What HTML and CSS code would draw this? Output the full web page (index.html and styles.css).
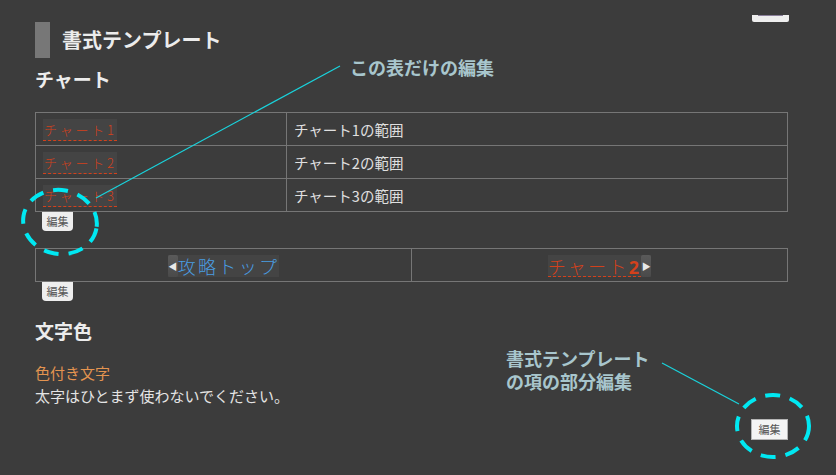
FILE: index.html
```html
<!DOCTYPE html>
<html lang="ja">
<head>
<meta charset="utf-8">
<link rel="stylesheet" href="styles.css">
</head>
<body>
<div class="page">
  <div class="top-btn"><span></span></div>
  <h2 class="sec-title"><span class="sec-bar"></span><span>書式テンプレート</span></h2>
  <h3 class="sub-title">チャート</h3>
  <table class="chart">
    <tr><td class="c1"><a class="tlink">チャート1</a></td><td>チャート1の範囲</td></tr>
    <tr><td class="c1"><a class="tlink">チャート2</a></td><td>チャート2の範囲</td></tr>
    <tr><td class="c1"><a class="tlink">チャート3</a></td><td>チャート3の範囲</td></tr>
  </table>
  <div class="edit">編集</div>
  <table class="nav">
    <tr>
      <td><span class="navbox"><span class="arr">&#9664;</span><span class="nav-blue">攻略トップ</span></span></td>
      <td><span class="navbox"><span class="nav-red">チャート<b>2</b></span><span class="arr">&#9654;</span></span></td>
    </tr>
  </table>
  <div class="edit">編集</div>
  <h3 class="sub-title color-title">文字色</h3>
  <p class="orange">色付き文字</p>
  <p class="plain">太字はひとまず使わないでください。</p>
  <div class="edit-row"><div class="edit2">編集</div></div>
</div>

<svg class="overlay" width="836" height="475" viewBox="0 0 836 475">
  <line x1="340" y1="66" x2="96" y2="198" stroke="#19d3dc" stroke-width="1.2"/>
  <line x1="662" y1="363" x2="739" y2="404" stroke="#19d3dc" stroke-width="1.2"/>
  <ellipse cx="60" cy="222" rx="37" ry="32" fill="none" stroke="#00e8f2" stroke-width="4" stroke-dasharray="15 10" transform="rotate(10 60 222)"/>
  <ellipse cx="773" cy="426" rx="36" ry="31" fill="none" stroke="#00e8f2" stroke-width="4" stroke-dasharray="15 10"/>
</svg>
<div class="note note1">この表だけの編集</div>
<div class="note note2"><div>書式テンプレート</div><div>の項の部分編集</div></div>
</body>
</html>
```
FILE: styles.css
```css
html, body {
  margin: 0;
  padding: 0;
  background: #3c3c3c;
}
body {
  width: 836px;
  height: 475px;
  overflow: hidden;
  position: relative;
  font-family: "Noto Sans CJK JP", "Noto Sans", sans-serif;
  color: #e2e2e2;
}
.page {
  padding: 22px 48px 0 35px;
}
.top-btn {
  position: absolute;
  left: 752px;
  top: 15px;
  width: 37px;
  height: 7px;
  background: #eeeeee;
  border-radius: 0 0 2px 2px;
}
.top-btn span {
  display: block;
  margin: 0 6px;
  height: 1px;
  background: #8a7f9a;
}
.sec-title {
  display: flex;
  align-items: center;
  gap: 12px;
  margin: 0;
  height: 36px;
  font-size: 20px;
  font-weight: 700;
  color: #ececec;
  line-height: 1;
}
.sec-bar {
  width: 15px;
  height: 36px;
  background: #777777;
}
.sub-title {
  margin: 0;
  font-size: 19px;
  font-weight: 700;
  color: #ececec;
  line-height: 28px;
  margin-top: 7px;
}
table {
  border-collapse: collapse;
  width: 753px;
  table-layout: fixed;
}
td {
  border: 1px solid #767676;
  padding: 0 7px;
  height: 32px;
  font-size: 14.5px;
  color: #e0e0e0;
  vertical-align: middle;
}
.chart {
  margin-top: 19px;
}
.chart td.c1 {
  width: 236px;
}
.tlink {
  display: inline-block;
  background: #444444;
  color: #d2411c;
  font-size: 13px;
  letter-spacing: 2.8px;
  font-weight: 300;
  line-height: 20px;
  padding: 1px 0 0 1px;
  border-bottom: 1px dashed #d2411c;
}
.edit {
  display: inline-block;
  margin-left: 7px;
  width: 31px;
  height: 19px;
  background: #eeeeee;
  border-radius: 0 0 4px 4px;
  color: #555;
  font-size: 11px;
  line-height: 19px;
  text-align: center;
  vertical-align: top;
}
.chart + .edit {
  margin-bottom: 17px;
}
.nav td {
  text-align: center;
  padding: 0;
}
.navbox {
  display: inline-flex;
  align-items: stretch;
  height: 22px;
  background: #444444;
  vertical-align: middle;
}
.arr {
  display: flex;
  align-items: center;
  justify-content: center;
  width: 10px;
  font-size: 9px;
  color: #e8e8e8;
  background: linear-gradient(#5a5a5a, #4a4a4a);
  border-radius: 2px;
}
.nav-blue, .nav-red {
  font-size: 18px;
  line-height: 22px;
  letter-spacing: 2.3px;
  font-weight: 300;
}
.nav-blue {
  color: #4a9ee2;
}
.nav-red {
  color: #d2411c;
  border-bottom: 1px dashed #d2411c;
}
.nav-red b {
  font-weight: 700;
  font-family: "Open Sans", sans-serif;
}
.color-title {
  margin-top: 11px;
}
p {
  margin: 0;
  font-size: 15px;
  line-height: 23px;
}
.orange {
  margin-top: 16px;
  color: #e39450;
}
.plain {
  color: #e4e4e4;
}
.edit-row {
  display: flex;
  justify-content: flex-end;
  margin-top: 12px;
}
.edit2 {
  width: 35px;
  height: 19px;
  background: #f4f4f4;
  border: 1px solid #b5b5b5;
  color: #555;
  font-size: 11px;
  line-height: 19px;
  text-align: center;
}
.overlay {
  position: absolute;
  left: 0;
  top: 0;
  pointer-events: none;
}
.note {
  position: absolute;
  font-size: 18px;
  font-weight: 700;
  color: #a8c6cd;
  line-height: 23px;
}
.note1 {
  left: 350px;
  top: 56px;
}
.note2 {
  left: 506px;
  top: 347px;
}
```
